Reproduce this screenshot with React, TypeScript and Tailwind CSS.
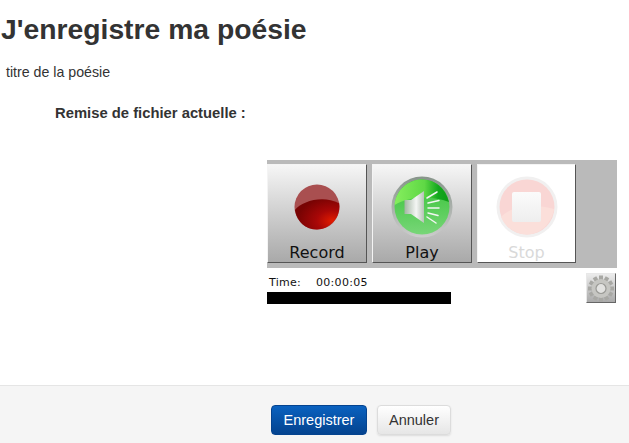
const sans = "font-['Liberation_Sans',Arial,sans-serif]";

function RecordIcon() {
  return (
    <svg width="46" height="46" viewBox="0 0 48 48">
      <defs>
        <radialGradient id="recLow" cx="0.85" cy="0.72" r="0.8">
          <stop offset="0" stopColor="#e21c00" />
          <stop offset="0.45" stopColor="#a80707" />
          <stop offset="1" stopColor="#780303" />
        </radialGradient>
      </defs>
      <circle cx="24" cy="24" r="23.5" fill="#a94f50" />
      <path d="M1 27 C8 18 30 11 47 20 C49.5 35 37 47.5 24 47.5 C12 47.5 3 39 1 27 Z" fill="url(#recLow)" />
    </svg>
  );
}

function PlayIcon() {
  return (
    <svg width="62" height="62" viewBox="0 0 62 62">
      <defs>
        <linearGradient id="playRim" x1="0" y1="0" x2="0" y2="1">
          <stop offset="0" stopColor="#87948a" />
          <stop offset="1" stopColor="#cccccc" />
        </linearGradient>
        <linearGradient id="playLow" x1="0" y1="0" x2="0" y2="1">
          <stop offset="0" stopColor="#35c235" />
          <stop offset="1" stopColor="#78d678" />
        </linearGradient>
        <linearGradient id="playTop" x1="0" y1="0" x2="1" y2="0">
          <stop offset="0" stopColor="#86ee5e" />
          <stop offset="0.55" stopColor="#5fd845" />
          <stop offset="0.8" stopColor="#14a81e" />
          <stop offset="1" stopColor="#0e9c18" />
        </linearGradient>
        <linearGradient id="speaker" x1="0" y1="0" x2="1" y2="0">
          <stop offset="0" stopColor="#a3b5a3" />
          <stop offset="0.6" stopColor="#f4f6f4" />
          <stop offset="1" stopColor="#b6c2b6" />
        </linearGradient>
      </defs>
      <circle cx="31" cy="31" r="30.5" fill="url(#playRim)" />
      <circle cx="31" cy="31" r="27.5" fill="url(#playLow)" />
      <path d="M3.6 29 C5 14 17 3.5 31 3.5 C44 3.5 54.5 12 58 26 C40 19 18 20 3.6 29 Z" fill="url(#playTop)" />
      <path d="M13.5 24 H20 L33 15 V47 L20 38 H13.5 Z" fill="url(#speaker)" />
      <g stroke="#f2f6f2" strokeWidth="1.5" strokeLinecap="round">
        <line x1="36" y1="22" x2="46" y2="16" />
        <line x1="37" y1="27" x2="48" y2="24.5" />
        <line x1="37" y1="32" x2="48" y2="32" />
        <line x1="37" y1="37" x2="47" y2="39.5" />
        <line x1="36" y1="41" x2="45" y2="47" />
      </g>
    </svg>
  );
}

function StopIcon() {
  return (
    <svg width="62" height="62" viewBox="0 0 62 62">
      <defs>
        <linearGradient id="stopSq" x1="0" y1="0" x2="0" y2="1">
          <stop offset="0" stopColor="#fbfbfb" />
          <stop offset="1" stopColor="#eeeeee" />
        </linearGradient>
      </defs>
      <circle cx="31" cy="31" r="30.5" fill="#f1f0f0" />
      <circle cx="31" cy="31" r="27.5" fill="#f9d6d4" />
      <path d="M5 41 C14 30 38 27 58 33 C56 47 44 58.5 31 58.5 C19 58.5 9 51 5 41 Z" fill="#fbdfda" />
      <rect x="16" y="16" width="29" height="30" rx="2" fill="url(#stopSq)" />
    </svg>
  );
}

function GearIcon() {
  const teeth = [0, 30, 60, 90, 120, 150, 180, 210, 240, 270, 300, 330];
  return (
    <svg width="26" height="27" viewBox="0 0 26 27">
      <g fill="#a8a8a4">
        {teeth.map((a) => (
          <rect key={a} x="11" y="0.5" width="4" height="5" transform={`rotate(${a} 13 13.5)`} />
        ))}
      </g>
      <circle cx="13" cy="13.5" r="9.5" fill="#c6c6c2" />
      <circle cx="13" cy="13.5" r="5" fill="#e2e2e0" stroke="#9a9a96" strokeWidth="1.2" />
    </svg>
  );
}

function PlayerButton({ label, disabled, children }: { label: string; disabled?: boolean; children: React.ReactNode }) {
  return (
    <div
      className={
        disabled
          ? "flex h-[99px] w-[99px] flex-col items-center border border-[#f4f4f4] border-r-[#555] border-b-[#555] bg-white"
          : "flex h-[99px] w-[100px] flex-col items-center border border-[#f4f4f4] border-r-[#555] border-b-[#555] bg-gradient-to-b from-[#f6f6f6] to-[#a9a9a9]"
      }
    >
      <div className="flex h-[80px] w-full items-center justify-center pt-[4px]">{children}</div>
      <span
        className={
          disabled
            ? "font-['DejaVu_Sans',sans-serif] text-[16px] leading-[18px] text-[#d9d9d9]"
            : "font-['DejaVu_Sans',sans-serif] text-[16px] leading-[18px] text-[#111]"
        }
      >
        {label}
      </span>
    </div>
  );
}

export default function App() {
  return (
    <div className={`${sans} flex h-[443px] w-[629px] flex-col overflow-hidden bg-white text-[#333]`}>
      <h1 className="pl-px pt-[13px] text-[28.3px] font-bold leading-[32px]">J'enregistre ma poésie</h1>

      <p className="pl-[6px] pt-[18px] text-[14.2px] leading-[18px]">titre de la poésie</p>

      <div className="pl-[55px] pt-[23px] text-[14.8px] font-bold leading-[18px]">Remise de fichier actuelle :</div>

      {/* recorder widget */}
      <div className="ml-[267px] mt-[38px] w-[350px]">
        <div className="flex h-[108px] gap-[5px] bg-[#bababa] pt-1">
          <PlayerButton label="Record">
            <RecordIcon />
          </PlayerButton>
          <PlayerButton label="Play">
            <PlayIcon />
          </PlayerButton>
          <PlayerButton label="Stop" disabled>
            <StopIcon />
          </PlayerButton>
        </div>
        <div className="flex justify-between pt-[5px]">
          <div>
            <div className="flex h-[19px] items-center pl-[2px] pt-[2px] font-['DejaVu_Sans',sans-serif] text-[11px] tracking-[0.3px] text-[#111]">
              <span className="w-[47px]">Time:</span>
              <span>00:00:05</span>
            </div>
            <div className="h-3 w-[184px] bg-black" />
          </div>
          <div className="mr-px flex h-[30px] w-[30px] items-center justify-center border border-[#e8e8e8] border-r-[#666] border-b-[#666] bg-gradient-to-b from-[#ececec] to-[#aaaaaa]">
            <GearIcon />
          </div>
        </div>
      </div>

      <div className="mt-auto flex h-[58px] justify-center gap-[10px] border-t border-[#e5e5e5] bg-[#f5f5f5] pl-[93px] pt-[19px]">
        <button className="h-[30px] w-[96px] rounded-[4px] border border-[#04438f] bg-gradient-to-b from-[#0a62c0] to-[#04438f] pt-px text-[14.5px] text-white">
          Enregistrer
        </button>
        <button className="h-[30px] w-[74px] rounded-[4px] border border-[#dcdcdc] bg-gradient-to-b from-white to-[#e6e6e6] pt-px text-[14.5px] text-[#333] shadow-[0_1px_2px_rgba(0,0,0,0.1)]">
          Annuler
        </button>
      </div>
    </div>
  );
}
